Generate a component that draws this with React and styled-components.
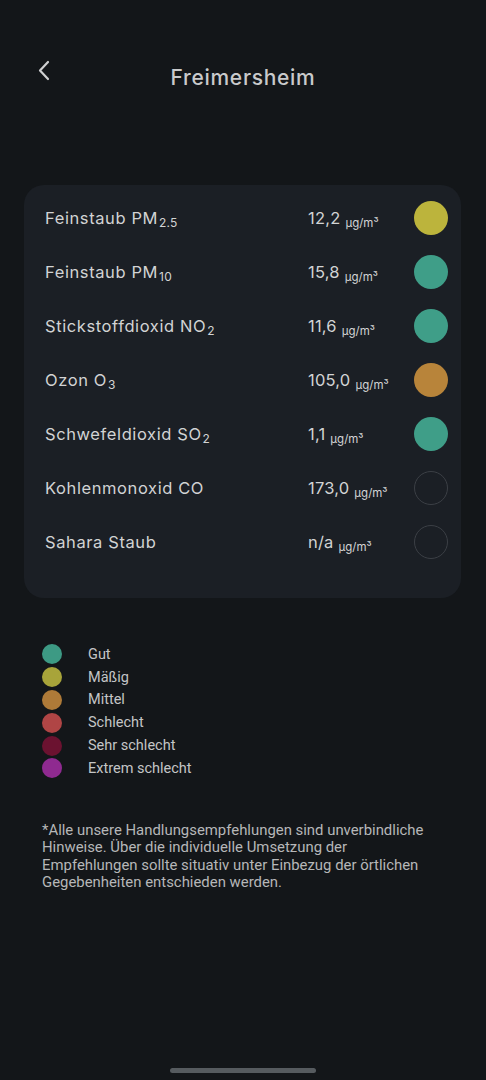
import React from "react";
import styled, { createGlobalStyle } from "styled-components";

const GlobalStyle = createGlobalStyle`
  html, body {
    margin: 0;
    padding: 0;
    background: #131619;
  }
  #root {
    min-height: 1080px;
  }
`;

const Screen = styled.div`
  width: 486px;
  height: 1080px;
  background: #131619;
  display: flex;
  flex-direction: column;
  position: relative;
  overflow: hidden;
  font-family: "Inter", "Noto Sans", sans-serif;
`;

const Header = styled.header`
  height: 72px;
  margin-top: 40px;
  display: flex;
  align-items: center;
  justify-content: center;
  position: relative;
`;

const BackButton = styled.button`
  position: absolute;
  left: 32px;
  top: 16px;
  width: 24px;
  height: 30px;
  border: none;
  background: transparent;
  padding: 0;
  display: flex;
  align-items: center;
  justify-content: center;
  cursor: pointer;
`;

const Title = styled.h1`
  margin: 0;
  margin-top: 2px;
  font-size: 21px;
  font-weight: 500;
  letter-spacing: 0.7px;
  color: #c9cacb;
`;

const Card = styled.section`
  margin: 73px 25px 0 24px;
  background: #1b1f25;
  border-radius: 20px;
  padding: 6px 13px 29px 21px;
  display: flex;
  flex-direction: column;
`;

const Row = styled.div`
  height: 54px;
  display: grid;
  grid-template-columns: 263px 1fr 34px;
  align-items: center;
`;

const Label = styled.span`
  font-size: 16.5px;
  color: #d2d3d4;
  letter-spacing: 0.6px;
`;

const Sub = styled.span`
  font-size: 12px;
  margin-left: 1px;
  letter-spacing: 0.2px;
  position: relative;
  top: 3px;
`;

const Value = styled.span`
  font-size: 16.5px;
  color: #d2d3d4;
  letter-spacing: 0.2px;
`;

const Unit = styled.span`
  font-size: 11.5px;
  margin-left: 5px;
  letter-spacing: 0;
  position: relative;
  top: 3px;
`;

const Dot = styled.span`
  width: ${(p) => p.size}px;
  height: ${(p) => p.size}px;
  border-radius: 50%;
  box-sizing: border-box;
  background: ${(p) => p.color || "transparent"};
  border: ${(p) => (p.color ? "none" : "1px solid #3b3f45")};
  flex-shrink: 0;
`;

const Legend = styled.ul`
  list-style: none;
  margin: 45px 0 0 42px;
  padding: 0;
  display: flex;
  flex-direction: column;
`;

const LegendItem = styled.li`
  height: 22.8px;
  display: flex;
  align-items: center;
  gap: 26px;
  font-family: Roboto, "Liberation Sans", sans-serif;
  font-size: 14.5px;
  color: #c4c5c6;
`;

const Note = styled.p`
  margin: 42px 50px 0 42px;
  font-family: Roboto, "Liberation Sans", sans-serif;
  font-size: 14.9px;
  line-height: 17.5px;
  color: #b6b7b8;
`;

const HomeBar = styled.div`
  position: absolute;
  left: 170px;
  bottom: 7px;
  width: 146px;
  height: 5px;
  border-radius: 3px;
  background: #565b5f;
`;

const rows = [
  { name: "Feinstaub PM", sub: "2.5", value: "12,2", color: "#bcb43c" },
  { name: "Feinstaub PM", sub: "10", value: "15,8", color: "#3f9e88" },
  { name: "Stickstoffdioxid NO", sub: "2", value: "11,6", color: "#3f9e88" },
  { name: "Ozon O", sub: "3", value: "105,0", color: "#b8843a" },
  { name: "Schwefeldioxid SO", sub: "2", value: "1,1", color: "#3f9e88" },
  { name: "Kohlenmonoxid CO", value: "173,0" },
  { name: "Sahara Staub", value: "n/a" },
];

const legend = [
  { label: "Gut", color: "#3d9a84" },
  { label: "Mäßig", color: "#a8a43a" },
  { label: "Mittel", color: "#ae7a38" },
  { label: "Schlecht", color: "#b04545" },
  { label: "Sehr schlecht", color: "#6b1230" },
  { label: "Extrem schlecht", color: "#8f2a90" },
];

const App = () => {
  return (
    <Screen>
      <GlobalStyle />
      <Header>
        <BackButton aria-label="Zurück">
          <svg width="14" height="24" viewBox="0 0 14 24" fill="none">
            <path
              d="M11 3 L3 11.5 L11 20"
              stroke="#cfd0d1"
              strokeWidth="2.2"
              strokeLinecap="round"
              strokeLinejoin="round"
            />
          </svg>
        </BackButton>
        <Title>Freimersheim</Title>
      </Header>

      <Card>
        {rows.map((r, i) => (
          <Row key={i}>
            <Label>
              {r.name}
              {r.sub && <Sub>{r.sub}</Sub>}
            </Label>
            <Value>
              {r.value}
              <Unit>µg/m³</Unit>
            </Value>
            <Dot size={34} color={r.color} />
          </Row>
        ))}
      </Card>

      <Legend>
        {legend.map((l) => (
          <LegendItem key={l.label}>
            <Dot size={20} color={l.color} />
            {l.label}
          </LegendItem>
        ))}
      </Legend>

      <Note>
        *Alle unsere Handlungsempfehlungen sind unverbindliche Hinweise. Über
        die individuelle Umsetzung der Empfehlungen sollte situativ unter
        Einbezug der örtlichen Gegebenheiten entschieden werden.
      </Note>

      <HomeBar />
    </Screen>
  );
};

export default App;
